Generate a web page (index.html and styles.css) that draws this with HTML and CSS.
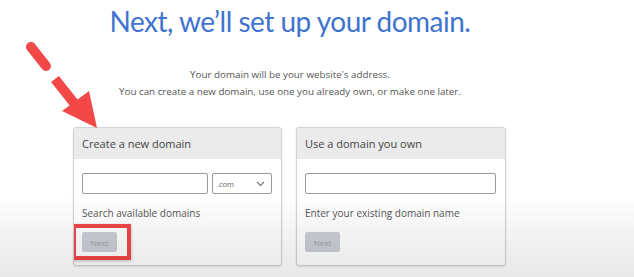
FILE: index.html
```html
<!DOCTYPE html>
<html lang="en">
<head>
<meta charset="utf-8">
<title>Set up your domain</title>
<link rel="stylesheet" href="styles.css">
</head>
<body>
<main class="page">
  <h1 class="title">Next, we’ll set up your domain.</h1>
  <p class="intro">Your domain will be your website's address.<br>You can create a new domain, use one you already own, or make one later.</p>
  <div class="cards">
    <section class="card">
      <header class="card-head">Create a new domain</header>
      <div class="card-body">
        <div class="row">
          <input class="field field-name" type="text">
          <div class="select"><span>.com</span>
            <svg class="chev" width="9" height="6" viewBox="0 0 9 6"><path d="M1 1 L4.5 4.5 L8 1" fill="none" stroke="#777" stroke-width="1.1"/></svg>
          </div>
        </div>
        <div class="hint">Search available domains</div>
        <span class="btn-wrap highlighted"><button class="btn">Next</button></span>
      </div>
    </section>
    <section class="card card-right">
      <header class="card-head">Use a domain you own</header>
      <div class="card-body">
        <div class="row">
          <input class="field field-full" type="text">
        </div>
        <div class="hint">Enter your existing domain name</div>
        <span class="btn-wrap"><button class="btn">Next</button></span>
      </div>
    </section>
  </div>
</main>
<svg class="arrow" width="634" height="277" viewBox="0 0 634 277">
  <line x1="31" y1="47" x2="46" y2="66" stroke="#f24848" stroke-width="10" stroke-linecap="round"/>
  <line x1="55" y1="79" x2="74" y2="103" stroke="#f24848" stroke-width="10"/>
  <polygon points="62,111 89,91 97,128" fill="#f24848"/>
</svg>
<div class="shade"></div>
</body>
</html>
```

FILE: styles.css
```css
html, body {
  margin: 0;
  padding: 0;
  background: #ffffff;
}
body {
  width: 634px;
  height: 277px;
  overflow: hidden;
  position: relative;
  font-family: "Open Sans", "Liberation Sans", sans-serif;
}
.page {
  width: 580px;
  display: flex;
  flex-direction: column;
  align-items: center;
}
.title {
  margin: 0;
  padding-top: 5px;
  font-family: "Lato", "Open Sans", sans-serif;
  font-weight: 400;
  font-size: 28px;
  line-height: 32px;
  color: #3f73cf;
  letter-spacing: -0.5px;
}
.intro {
  margin: 29px 0 0;
  font-size: 9.8px;
  line-height: 17px;
  color: #555555;
  text-align: center;
}
.cards {
  margin-top: 27px;
  display: flex;
  gap: 14px;
  margin-left: -1px;
}
.card {
  width: 207px;
  border: 1px solid #d3d3d3;
  border-radius: 3px;
  box-shadow: 0 1px 2px rgba(0,0,0,0.12);
  background: #fff;
  overflow: hidden;
}
.card-right {
  width: 208px;
}
.card-head {
  height: 31px;
  background: #ebebeb;
  padding-left: 8px;
  font-size: 11px;
  line-height: 31px;
  color: #444;
}
.card-body {
  padding: 14px 8px 13px;
  display: flex;
  flex-direction: column;
  align-items: flex-start;
}
.row {
  display: flex;
  gap: 4px;
  width: 100%;
}
.field {
  box-sizing: border-box;
  height: 21px;
  border: 1px solid #9a9a9a;
  border-radius: 2px;
  margin: 0;
  padding: 0;
  background: #fff;
}
.field-name { width: 126px; }
.field-full { width: 191px; }
.select {
  box-sizing: border-box;
  width: 60px;
  height: 21px;
  border: 1px solid #9a9a9a;
  border-radius: 2px;
  display: flex;
  align-items: center;
  justify-content: space-between;
  padding: 0 6px 0 4px;
  font-size: 7.5px;
  color: #666;
}
.hint {
  margin-top: 11px;
  font-size: 10px;
  line-height: 17px;
  color: #555;
}
.btn-wrap {
  margin-top: 10px;
  position: relative;
  display: inline-flex;
}
.highlighted::after {
  content: "";
  position: absolute;
  left: -10px;
  top: -8px;
  right: -14px;
  bottom: -8px;
  border: 4px solid #f04747;
  box-shadow: 0 1px 3px rgba(0,0,0,0.25);
}
.btn {
  width: 35px;
  height: 20px;
  border: none;
  border-radius: 2px;
  background: #cbced6;
  color: #9a9ca3;
  font-family: "Open Sans", sans-serif;
  font-size: 8px;
  padding: 0;
}
.arrow {
  position: absolute;
  left: 0;
  top: 0;
  pointer-events: none;
}
.shade {
  position: absolute;
  left: 0;
  top: 195px;
  width: 634px;
  height: 82px;
  background: linear-gradient(to bottom, rgba(0,0,0,0) 0%, rgba(0,0,0,0.05) 50%, rgba(0,0,0,0.09) 100%);
  pointer-events: none;
}
```
